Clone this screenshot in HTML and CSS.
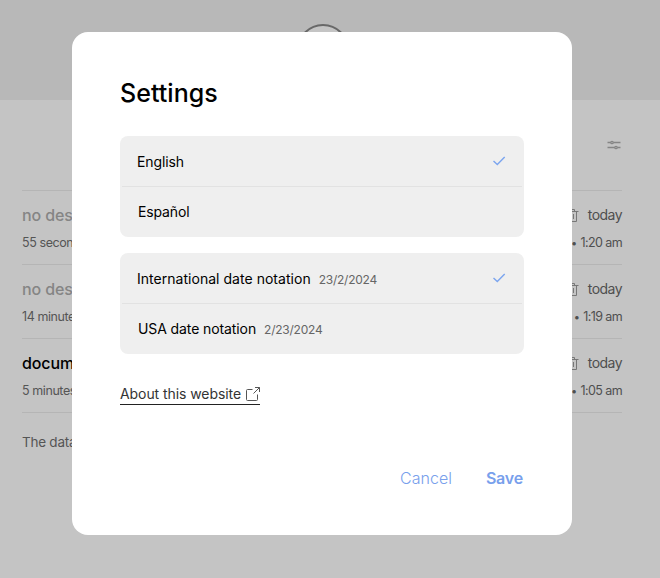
FILE: index.html
```html
<!DOCTYPE html>
<html lang="en">
<head>
<meta charset="utf-8">
<title>Settings</title>
<link rel="stylesheet" href="styles.css">
</head>
<body>
<div class="page">
  <header class="hero"><div class="logo"></div></header>
  <main class="content">
    <div class="toolbar">
      <svg width="14" height="12" viewBox="0 0 14 12" fill="none" stroke="#858585" stroke-width="1.3"><path d="M.5 3.5h3.2M6.3 3.5h7.2M.5 8.5h7.2M10.3 8.5h3.2"/><circle cx="5" cy="3.5" r="1.2"/><circle cx="9" cy="8.5" r="1.2"/></svg>
    </div>
    <ul class="docs">
      <li class="doc">
        <div class="doc-line"><span class="doc-name">no description</span><span class="doc-day"><svg class="trash" width="14" height="16" viewBox="0 0 14 16"><path d="M.5 3.5h13M4.5 3.5v-2h5v2M2.5 3.5v10h9v-10M5.5 6v5M8.5 6v5"/></svg><span class="day">today</span></span></div>
        <div class="doc-meta"><span>55 seconds</span><span class="time"><span class="dot">•</span> 1:20 am</span></div>
      </li>
      <li class="doc">
        <div class="doc-line"><span class="doc-name">no description</span><span class="doc-day"><svg class="trash" width="14" height="16" viewBox="0 0 14 16"><path d="M.5 3.5h13M4.5 3.5v-2h5v2M2.5 3.5v10h9v-10M5.5 6v5M8.5 6v5"/></svg><span class="day">today</span></span></div>
        <div class="doc-meta"><span>14 minutes</span><span class="time"><span class="dot">•</span> 1:19 am</span></div>
      </li>
      <li class="doc">
        <div class="doc-line"><span class="doc-name named">document</span><span class="doc-day"><svg class="trash" width="14" height="16" viewBox="0 0 14 16"><path d="M.5 3.5h13M4.5 3.5v-2h5v2M2.5 3.5v10h9v-10M5.5 6v5M8.5 6v5"/></svg><span class="day">today</span></span></div>
        <div class="doc-meta"><span>5 minutes</span><span class="time"><span class="dot">•</span> 1:05 am</span></div>
      </li>
    </ul>
    <p class="note">The data</p>
  </main>
</div>

<div class="overlay">
  <section class="modal" role="dialog">
    <h1>Settings</h1>
    <div class="options">
      <div class="option"><span class="label english">English</span><svg class="check" width="14" height="10" viewBox="0 0 14 10"><path d="M1.5 5l3.8 3.5L12.7 1"/></svg></div>
      <div class="option"><span class="label spanish">Español</span></div>
    </div>
    <div class="options">
      <div class="option"><span class="label intl">International date notation</span><span class="sample">23/2/2024</span><svg class="check" width="14" height="10" viewBox="0 0 14 10"><path d="M1.5 5l3.8 3.5L12.7 1"/></svg></div>
      <div class="option"><span class="label usa">USA date notation</span><span class="sample">2/23/2024</span></div>
    </div>
    <a class="about"><span class="about-text">About this website</span><svg width="14" height="14" viewBox="0 0 14 14"><path d="M6.5 2.5h-5q-1 0-1 1v9q0 1 1 1h9q1 0 1-1V7.5M7.5 6.5l6-6M9 .5h4.5V5"/></svg></a>
    <div class="actions"><span class="cancel">Cancel</span><span class="save">Save</span></div>
  </section>
</div>
</body>
</html>
```
FILE: styles.css
```css
* { box-sizing: border-box; }
body {
  margin: 0;
  height: 578px;
  overflow: hidden;
  background: #c4c4c4;
  font-family: Inter, "Liberation Sans", sans-serif;
  font-size: 14px;
  color: #000;
  white-space: nowrap;
}
.hero { display: flex; justify-content: center; height: 100px; padding: 24px 0 0; background: #b8b8b8; }
.logo { width: 52px; height: 52px; margin-right: 15px; border: 2px solid #686868; border-radius: 50%; background: #c4c4c4; }
.content { padding: 0 38px 0 22px; }
.toolbar { display: flex; justify-content: flex-end; height: 90px; padding: 39px 1px 0 0; }
.docs { list-style: none; margin: 0; padding: 0; border-top: 1px solid #b5b5b5; }
.doc { height: 74px; padding-top: 12px; border-bottom: 1px solid #b5b5b5; }
.doc-line, .doc-meta { display: flex; justify-content: space-between; align-items: center; }
.doc-line { height: 24px; }
.doc-name { font-size: 16px; font-weight: 500; color: #858585; letter-spacing: -.1px; }
.doc-name.named { color: #000; }
.doc-day { display: flex; align-items: center; gap: 9px; color: #4f4f4f; }
.day { padding-bottom: 2px; letter-spacing: -.55px; }
.trash { margin-top: 1px; fill: none; stroke: #777; }
.doc-meta { height: 20px; margin-top: 5px; font-size: 12.5px; color: #555; letter-spacing: -.42px; }
.time { color: #4f4f4f; letter-spacing: -.6px; }
.dot { font-size: 11px; margin-right: 1px; }
.note { margin: 0; padding-top: 19px; line-height: 20px; font-size: 13.5px; color: #555; letter-spacing: -.25px; }

.overlay { position: absolute; inset: 0; padding: 32px 0 0 72px; }
.modal { width: 500px; height: 503px; padding: 45px 48px 0; border-radius: 16px; background: #fff; }
h1 { margin: 0 0 27px; padding-top: 1px; font-size: 25px; line-height: 31px; font-weight: 500; letter-spacing: .05px; }
.options { height: 101px; margin-bottom: 16px; padding: 0 2px; border-radius: 8px; background: #efefef; }
.option { display: flex; align-items: center; height: 50px; padding: 1px 16px 0 15px; }
.option + .option { height: 51px; padding: 0 16px 1px 16px; border-top: 1px solid #e2e2e2; }
.label { line-height: 20px; letter-spacing: -.13px; }
.intl { letter-spacing: .03px; }
.sample { margin-left: 8px; padding-top: 1px; font-size: 12px; color: #666; letter-spacing: -.24px; }
.usa { letter-spacing: -.1px; }
.check { margin: 0 0 2px auto; fill: none; stroke: #7ba5ef; stroke-width: 1.4; }
.about { display: inline-flex; align-items: center; width: 140px; height: 22px; margin-top: 13px; border-bottom: 1px solid #222; color: #333; }
.about-text { width: 126px; letter-spacing: -.07px; }
.about svg { fill: none; stroke: #555; }
.actions { display: flex; justify-content: flex-end; gap: 34px; margin-top: 63px; padding-right: 1px; line-height: 20px; font-size: 16px; color: #78a0ec; }
.cancel { font-weight: 300; }
.save { font-weight: 600; letter-spacing: -.2px; }
```
